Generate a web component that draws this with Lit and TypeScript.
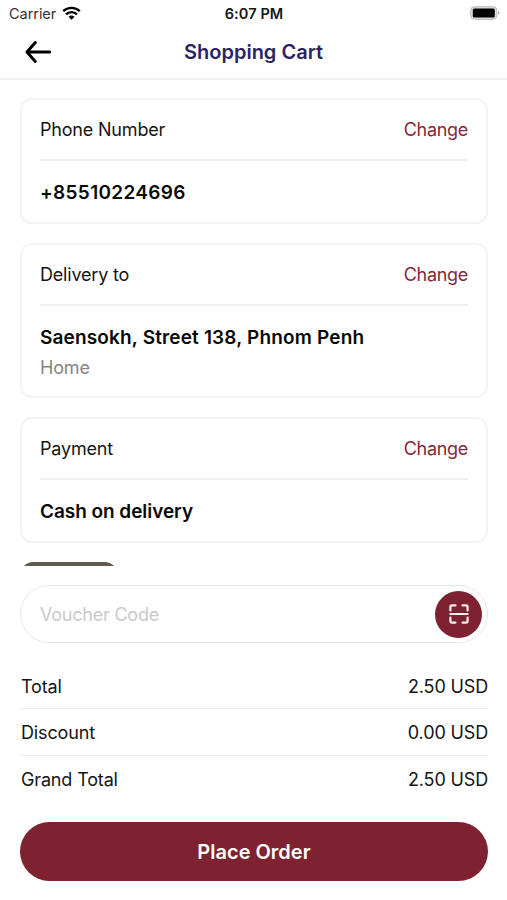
import { LitElement, html, css } from "lit";
import { customElement, property } from "lit/decorators.js";

@customElement("info-card")
class InfoCard extends LitElement {
  @property() label = "";
  @property() value = "";
  @property() note = "";

  static styles = css`
    :host { display: block; box-sizing: border-box; border: 2px solid #f3f3f3; border-radius: 12px; padding: 0 18px 0 18px; }
    .head { display: flex; justify-content: space-between; height: 59px; line-height: 60px; border-bottom: 2px solid #f0f0f0; font-size: 18px; letter-spacing: -0.19px; }
    .change { color: #84283a; letter-spacing: -0.3px; }
    .value { font-size: 19px; font-weight: 600; line-height: 24px; padding-top: 20px; white-space: nowrap; letter-spacing: var(--tracking, 0); color: #080808; }
    .note { font-size: 18px; line-height: 24px; color: #858585; margin-top: 6px; letter-spacing: -0.17px; }
  `;

  render() {
    return html`<div class="head"><span>${this.label}</span><span class="change">Change</span></div>
      <div class="value">${this.value}</div>
      ${this.note ? html`<div class="note">${this.note}</div>` : ""}`;
  }
}

@customElement("app-root")
class AppRoot extends LitElement {
  static styles = css`
    :host { display: flex; flex-direction: column; width: 507px; height: 900px; overflow: hidden; background: #fff; color: #151515; font-family: Inter, sans-serif; font-size: 18px; letter-spacing: -0.15px; }
    * { box-sizing: border-box; }
    .status { display: grid; grid-template-columns: 1fr auto 1fr; align-items: center; height: 27px; padding: 0 7px 0 9px; font-size: 14.5px; }
    .carrier { display: flex; align-items: center; gap: 6px; color: #333; letter-spacing: -0.05px; }
    .carrier svg { margin-top: -2px; }
    .time { font-weight: 600; letter-spacing: 0.1px; margin-left: -1px; }
    .battery { justify-self: end; margin-top: -1px; }
    svg { display: block; }
    .nav { display: grid; grid-template-columns: 60px 1fr 60px; align-items: center; height: 53px; border-bottom: 2px solid #f0f0f0; }
    .back { margin-left: 24px; margin-top: -1px; }
    .title { text-align: center; color: #2c2362; font-weight: 600; font-size: 20px; letter-spacing: 0; margin-top: -1px; }
    .cards { height: 486px; padding: 18px 19px 0 20px; display: flex; flex-direction: column; gap: 19px; overflow: hidden; }
    .c1, .c3 { height: 126px; flex: none; }
    .c2 { height: 155px; flex: none; }
    .c1 { --tracking: 0.32px; }
    .c2 { --tracking: 0.16px; }
    .c3 { --tracking: -0.05px; }
    .thumb { flex: none; width: 96px; height: 98px; margin-left: 1px; border-radius: 12px; background: #5d5c4c; }
    .voucher { display: flex; justify-content: space-between; align-items: center; height: 58px; margin: 19px 19px 0 20px; padding: 0 5px 0 19px; border: 1px solid #e8e8e8; border-radius: 30px; color: #c9c9c9; letter-spacing: -0.22px; }
    .scan { width: 47px; height: 47px; border-radius: 50%; background: #7e2130; display: grid; place-items: center; }
    .totals { margin: 20px 19px 0 20px; }
    .row { display: flex; justify-content: space-between; height: 46px; line-height: 47px; border-bottom: 1px solid #e9e9e9; padding-left: 1px; }
    .row + .row { height: 47px; }
    .row:last-child { border: 0; }
    .order { margin: 19px 19px 0 20px; height: 59px; border: 0; border-radius: 30px; background: #7e2130; color: #fff; font: 600 20px Inter, sans-serif; letter-spacing: 0; }
  `;

  render() {
    return html`
      <div class="status">
        <span class="carrier">Carrier
          <svg width="19" height="14" viewBox="0 0 19 14"><path d="M1.2 5.2a12 12 0 0 1 16.6 0M4 8.3a8 8 0 0 1 11 0" fill="none" stroke="#000" stroke-width="2.4"/><path d="M6.5 10.8a4.4 4.4 0 0 1 6 0l-3 3z"/></svg>
        </span>
        <span class="time">6:07 PM</span>
        <svg class="battery" width="30" height="14" viewBox="0 0 30 14"><rect x=".75" y=".75" width="26" height="12.5" rx="3.5" fill="#ddd" stroke="#b8b8b8"/><rect x="2.8" y="2.4" width="22" height="9.2" rx="1.5"/><path d="M28 5q3 2 0 4z" fill="#aaa"/></svg>
      </div>
      <div class="nav">
        <svg class="back" width="28" height="24" viewBox="0 0 28 24"><path d="M11.3 2.6L3 12l8.3 9.4M3 12h22.6" fill="none" stroke="#000" stroke-width="3" stroke-linecap="round" stroke-linejoin="round"/></svg>
        <span class="title">Shopping Cart</span>
      </div>
      <div class="cards">
        <info-card class="c1" label="Phone Number" value="+85510224696"></info-card>
        <info-card class="c2" label="Delivery to" value="Saensokh, Street 138, Phnom Penh" note="Home"></info-card>
        <info-card class="c3" label="Payment" value="Cash on delivery"></info-card>
        <div class="thumb"></div>
      </div>
      <div class="voucher"><span>Voucher Code</span><span class="scan"><svg width="20" height="20" viewBox="0 0 20 20"><path d="M1.4 6.5V3q0-1.6 1.6-1.6h3.5M13.5 1.4H17q1.6 0 1.6 1.6v3.5M18.6 13.5V17q0 1.6-1.6 1.6h-3.5M6.5 18.6H3q-1.6 0-1.6-1.6v-3.5M1.4 10h17.2" fill="none" stroke="#fbeeee" stroke-width="2.2" stroke-linecap="round"/></svg></span></div>
      <div class="totals">
        <div class="row"><span>Total</span><span>2.50 USD</span></div>
        <div class="row"><span>Discount</span><span>0.00 USD</span></div>
        <div class="row"><span>Grand Total</span><span>2.50 USD</span></div>
      </div>
      <button class="order">Place Order</button>`;
  }
}
